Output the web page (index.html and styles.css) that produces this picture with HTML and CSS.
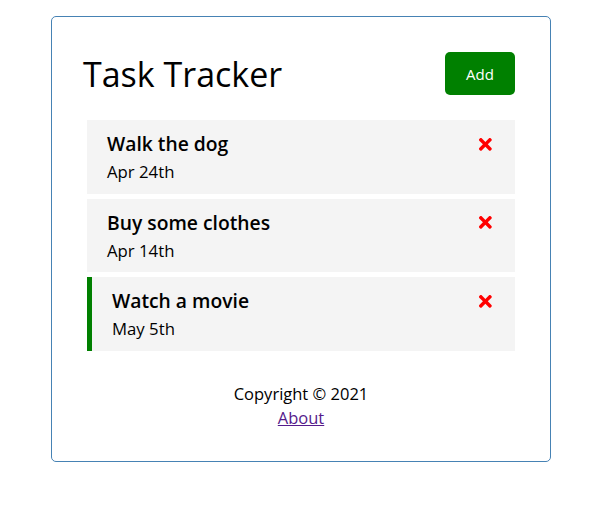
FILE: index.html
```html
<!DOCTYPE html>
<html>
<head>
<meta charset="utf-8">
<link rel="stylesheet" href="styles.css">
</head>
<body>
<div class="container">
  <header class="header">
    <h1 class="title">Task Tracker</h1>
    <button class="btn">Add</button>
  </header>
  <div class="task">
    <h3 class="task-title">Walk the dog <svg class="x" viewBox="0 0 352 512"><path d="M242.72 256l100.07-100.07c12.28-12.28 12.28-32.19 0-44.48l-22.24-22.24c-12.28-12.28-32.19-12.28-44.48 0L176 189.28 75.930 89.21c-12.28-12.28-32.19-12.28-44.48 0L9.21 111.45c-12.28 12.28-12.28 32.19 0 44.48L109.28 256 9.21 356.07c-12.28 12.28-12.28 32.19 0 44.48l22.24 22.24c12.28 12.28 32.2 12.28 44.48 0L176 322.72l100.07 100.07c12.28 12.28 32.2 12.28 44.48 0l22.24-22.24c12.28-12.28 12.28-32.19 0-44.48L242.72 256z"/></svg></h3>
    <p class="date">Apr 24th</p>
  </div>
  <div class="task">
    <h3 class="task-title">Buy some clothes <svg class="x" viewBox="0 0 352 512"><path d="M242.72 256l100.07-100.07c12.28-12.28 12.28-32.19 0-44.48l-22.24-22.24c-12.28-12.28-32.19-12.28-44.48 0L176 189.28 75.930 89.21c-12.28-12.28-32.19-12.28-44.48 0L9.21 111.45c-12.28 12.28-12.28 32.19 0 44.48L109.28 256 9.21 356.07c-12.28 12.28-12.28 32.19 0 44.48l22.24 22.24c12.28 12.28 32.2 12.28 44.48 0L176 322.72l100.07 100.07c12.28 12.28 32.2 12.280 44.48 0l22.24-22.24c12.28-12.28 12.28-32.19 0-44.48L242.72 256z"/></svg></h3>
    <p class="date">Apr 14th</p>
  </div>
  <div class="task reminder">
    <h3 class="task-title">Watch a movie <svg class="x" viewBox="0 0 352 512"><path d="M242.72 256l100.07-100.07c12.28-12.28 12.28-32.19 0-44.48l-22.24-22.24c-12.28-12.28-32.19-12.28-44.48 0L176 189.28 75.930 89.21c-12.28-12.28-32.19-12.28-44.48 0L9.21 111.45c-12.28 12.28-12.28 32.19 0 44.48L109.28 256 9.21 356.07c-12.28 12.28-12.28 32.19 0 44.48l22.24 22.24c12.28 12.28 32.2 12.28 44.48 0L176 322.72l100.07 100.07c12.28 12.28 32.2 12.28 44.48 0l22.24-22.24c12.28-12.28 12.28-32.19 0-44.48L242.72 256z"/></svg></h3>
    <p class="date">May 5th</p>
  </div>
  <footer class="footer">
    <p class="copy">Copyright &copy; 2021</p>
    <a class="about" href="#">About</a>
  </footer>
</div>
</body>
</html>
```

FILE: styles.css
```css
* { box-sizing: border-box; margin: 0; padding: 0; }
body {
  font-family: "Open Sans", "Noto Sans", sans-serif;
  background: #fff;
  color: #000;
}
.container {
  width: 500px;
  height: 446px;
  margin: 16px 0 0 51px;
  border: 1px solid steelblue;
  padding: 30px;
  border-radius: 5px;
}
.header {
  display: flex;
  justify-content: space-between;
  align-items: center;
  margin-bottom: 20px;
}
.title {
  font-size: 34px;
  font-weight: 500;
  line-height: 48px;
  padding-left: 1px;
}
.btn {
  display: inline-block;
  background: green;
  color: #fff;
  border: none;
  width: 70px;
  height: 43px;
  margin: 5px;
  border-radius: 5px;
  font-size: 15px;
  font-family: inherit;
}
.task {
  background: #f4f4f4;
  margin: 5px;
  padding: 10px 20px;
  height: 73.5px;
}
.task.reminder { border-left: 5px solid green; padding-left: 20px; }
.task-title {
  display: flex;
  align-items: center;
  justify-content: space-between;
  font-size: 19.3px;
  font-weight: 600;
  line-height: 28px;
}
.x {
  width: 18.72px;
  height: 18.72px;
  fill: red;
}
.date {
  font-size: 16.75px;
  line-height: 24px;
  margin-top: 2px;
}
.footer {
  margin-top: 31.5px;
  text-align: center;
  font-size: 16.5px;
  line-height: 24px;
}
.about {
  color: #551a8b;
}
```
